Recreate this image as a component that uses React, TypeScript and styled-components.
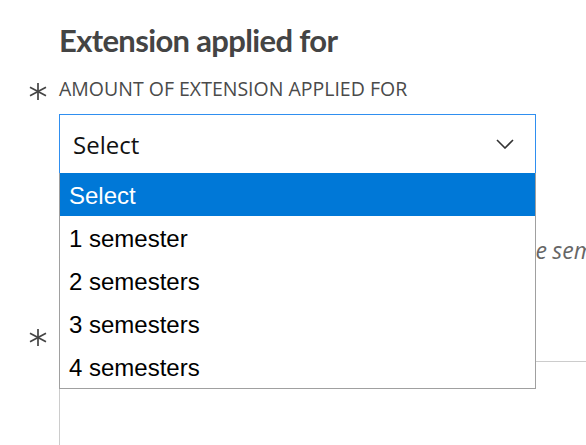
import styled, { createGlobalStyle } from 'styled-components'

const GlobalStyle = createGlobalStyle`
  html, body {
    margin: 0;
    padding: 0;
    background: #ffffff;
    overflow: hidden;
  }
  body {
    font-family: 'Open Sans', 'Noto Sans', sans-serif;
    color: #444444;
  }
`

const options = ['Select', '1 semester', '2 semesters', '3 semesters', '4 semesters']

const Asterisk = () => (
  <Star width='18' height='17' viewBox='0 0 18 17'>
    <g stroke='#444' strokeWidth='1.7' strokeLinecap='butt'>
      <line x1='9' y1='0' x2='9' y2='17' />
      <line x1='1' y1='4.2' x2='17' y2='12.8' />
      <line x1='1' y1='12.8' x2='17' y2='4.2' />
    </g>
  </Star>
)

export default function App() {
  return (
    <>
      <GlobalStyle />
      <Page>
        <Heading>Extension applied for</Heading>

        <Field>
          <Required><Asterisk /></Required>
          <Label>Amount of extension applied for</Label>
        </Field>

        <SelectWrap>
          <SelectBox>
            <SelectValue>Select</SelectValue>
            <Chevron width='18' height='10' viewBox='0 0 18 10'>
              <polyline points='1,1 9,9 17,1' fill='none' stroke='#333' strokeWidth='1.6' />
            </Chevron>
          </SelectBox>
          <Menu>
            {options.map((o, i) => (
              <Option key={o} active={i === 0}>{o}</Option>
            ))}
          </Menu>
        </SelectWrap>

        <Hint>
          State how many semesters you need to finish the semester studies.
        </Hint>

        <Field $gap={59}>
          <Required><Asterisk /></Required>
          <Label $accent>Reason for extension</Label>
        </Field>

        <TextArea />
      </Page>
    </>
  )
}

const Page = styled.div`
  padding: 19px 0 0 59px;
  position: relative;
`

const Heading = styled.h1`
  margin: 0;
  font-family: Lato, 'Open Sans', sans-serif;
  font-size: 31px;
  line-height: 42px;
  font-weight: 700;
  letter-spacing: -0.65px;
  color: #444444;
`

const Field = styled.div<{ $gap?: number }>`
  display: flex;
  align-items: center;
  margin-top: ${(p) => p.$gap ?? 15}px;
  margin-left: -59px;
  height: 24px;
`

const Required = styled.span`
  width: 46px;
  margin-right: 13px;
  display: flex;
  justify-content: flex-end;
  padding-top: 6px;
`

const Star = styled.svg`
  display: block;
  margin-right: -1px;
`

const Label = styled.span<{ $accent?: boolean }>`
  text-transform: uppercase;
  font-size: 19.5px;
  color: #4a4a4a;
  white-space: nowrap;
  border-left: ${(p) => (p.$accent ? '2px solid #e8a33b' : 'none')};
`

const SelectWrap = styled.div`
  position: relative;
  margin-top: 14px;
  width: 477px;
`

const SelectBox = styled.div`
  box-sizing: border-box;
  height: 60px;
  border: 1px solid #2f8ff0;
  display: flex;
  align-items: center;
  justify-content: space-between;
  padding: 0 21px 0 13px;
  background: #ffffff;
`

const SelectValue = styled.span`
  font-size: 24px;
  color: #111111;
`

const Chevron = styled.svg`
  display: block;
`

const Menu = styled.ul`
  position: absolute;
  top: 59px;
  left: 0;
  width: 477px;
  box-sizing: border-box;
  margin: 0;
  padding: 0;
  list-style: none;
  background: #ffffff;
  border: 1px solid #a0a0a0;
  border-top: none;
  z-index: 5;
`

const Option = styled.li<{ active?: boolean }>`
  box-sizing: border-box;
  height: 43px;
  display: flex;
  align-items: center;
  padding: 3px 0 0 9px;
  font-family: 'Liberation Sans', Arial, sans-serif;
  font-size: 24px;
  color: ${(p) => (p.active ? '#ffffff' : '#000000')};
  background: ${(p) => (p.active ? '#0078d7' : '#ffffff')};
`

const Hint = styled.p`
  margin: 63px 0 0;
  font-style: italic;
  font-size: 23px;
  line-height: 26px;
  word-spacing: -0.7px;
  color: #666666;
  white-space: nowrap;
`

const TextArea = styled.div`
  margin-top: 15px;
  width: 600px;
  height: 120px;
  border-top: 1px solid #cccccc;
  border-left: 1px solid #cccccc;
`
